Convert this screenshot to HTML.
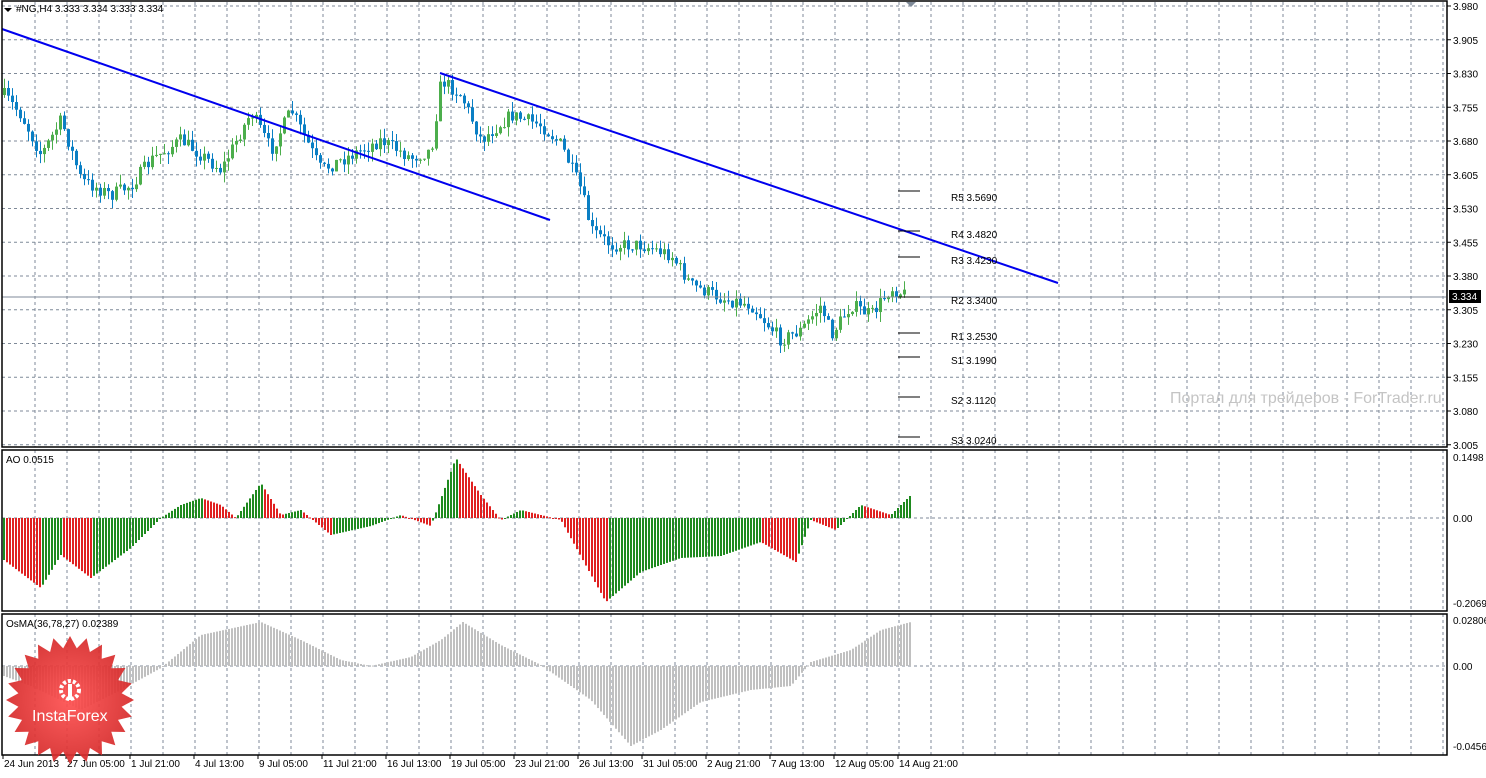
<!DOCTYPE html><html><head><meta charset="utf-8"><style>
body{margin:0;background:#fff;width:1486px;height:773px;overflow:hidden;font-family:"Liberation Sans",sans-serif}
svg text{font-family:"Liberation Sans","DejaVu Sans",sans-serif;font-size:10px;fill:#000}
</style></head><body>
<svg id="s" width="1486" height="773" xmlns="http://www.w3.org/2000/svg">
<rect width="1486" height="773" fill="#fff"/>
<g id="grid"></g>
<g id="bars"></g>
<line x1="2" y1="297" x2="1446" y2="297" stroke="#7f8a98" stroke-width="1"/>
<line x1="2" y1="29" x2="550" y2="220" stroke="#0000ee" stroke-width="2"/>
<line x1="440" y1="73" x2="1058" y2="283" stroke="#0000ee" stroke-width="2"/>
<g id="piv"></g>
<text x="1170" y="403" style="font-size:16px;fill:#c4c4c4">Портал для трейдеров - ForTrader.ru</text>
<g fill="none" stroke="#000" stroke-width="1.5">
<rect x="2" y="1" width="1445" height="446"/>
<rect x="2" y="450" width="1445" height="161"/>
<rect x="2" y="614" width="1445" height="141"/>
</g>
<path d="M4 8 L12 8 L8 12Z" fill="#000"/>
<text x="16" y="12">#NG,H4  3.333 3.334 3.333 3.334</text>
<path d="M906 2 L916 2 L911 7Z" fill="#7f8a98"/>
<text x="6" y="463">AO 0.0515</text>
<text x="6" y="627">OsMA(36,78,27) 0.02389</text>
<rect x="1449" y="290" width="32" height="13" fill="#000"/>
<text x="1452" y="300" style="fill:#fff">3.334</text>
<g id="axis"></g>
<defs><radialGradient id="rg" cx="50%" cy="50%" r="50%"><stop offset="0" stop-color="#ff5050"/><stop offset="1" stop-color="#d62a2a"/></radialGradient></defs>
<path id="star" fill="url(#rg)" opacity="0.92"/>
<g fill="#fff">
<circle cx="70" cy="690" r="9" fill="none" stroke="#fff" stroke-width="4" stroke-dasharray="3 2"/>
<rect x="68" y="684" width="4" height="16"/>
</g>
<text x="32" y="721" style="font-size:16px;fill:#fff">InstaForex</text>
</svg>
<script>
(function(){
var NS="http://www.w3.org/2000/svg";
function el(p,t,a,txt){var e=document.createElementNS(NS,t);for(var k in a)e.setAttribute(k,a[k]);if(txt)e.textContent=txt;document.getElementById(p).appendChild(e);return e;}
for(var x=35;x<=1443;x+=32.0){["2,447","450,611","614,755"].forEach(function(r){var q=r.split(",");el("grid","line",{x1:x,y1:q[0],x2:x,y2:q[1],stroke:"#7f8a98","stroke-dasharray":"3 3"});});}
var prices=["3.980","3.905","3.830","3.755","3.680","3.605","3.530","3.455","3.380","3.305","3.230","3.155","3.080","3.005"];
prices.forEach(function(p,i){var y=6+i*33.75;el("grid","line",{x1:2,y1:y,x2:1446,y2:y,stroke:"#7f8a98","stroke-dasharray":"3 3"});el("axis","line",{x1:1447,y1:y,x2:1451,y2:y,stroke:"#000"});el("axis","text",{x:1453,y:y+4},p);});
[[518,"0.00"],[666,"0.00"]].forEach(function(a){el("grid","line",{x1:2,y1:a[0],x2:1446,y2:a[0],stroke:"#7f8a98","stroke-dasharray":"3 3"});el("axis","text",{x:1453,y:a[0]+4},a[1]);});
el("axis","text",{x:1453,y:461},"0.1498");el("axis","text",{x:1453,y:607},"-0.2069");
el("axis","text",{x:1453,y:624},"0.02806");el("axis","text",{x:1453,y:750},"-0.04562");
var tl=[[3,"24 Jun 2013"],[66,"27 Jun 05:00"],[130,"1 Jul 21:00"],[194,"4 Jul 13:00"],[258,"9 Jul 05:00"],[322,"11 Jul 21:00"],[386,"16 Jul 13:00"],[450,"19 Jul 05:00"],[514,"23 Jul 21:00"],[578,"26 Jul 13:00"],[642,"31 Jul 05:00"],[706,"2 Aug 21:00"],[770,"7 Aug 13:00"],[834,"12 Aug 05:00"],[898,"14 Aug 21:00"]];
tl.forEach(function(t){el("axis","line",{x1:t[0],y1:755,x2:t[0],y2:759,stroke:"#000"});el("axis","text",{x:t[0]+1,y:767},t[1]);});
function interp(k,x){for(var i=0;i<k.length-1;i++){if(x>=k[i][0]&&x<=k[i+1][0]){var t=(x-k[i][0])/(k[i+1][0]-k[i][0]);return k[i][1]+t*(k[i+1][1]-k[i][1]);}}return k[k.length-1][1];}
var seed=7;function rnd(){seed=(seed*16807)%2147483647;return seed/2147483647;}
var main=[[3,95],[20,115],[40,155],[60,120],[80,180],[110,195],[130,185],[150,160],[180,140],[220,170],[250,112],[270,150],[290,110],[320,170],[350,155],[380,140],[410,158],[430,150],[440,80],[460,95],[480,140],[510,115],[540,125],[560,145],[580,190],[590,230],[610,245],[640,245],[670,255],[690,285],[720,298],[750,305],[780,340],[800,330],[820,305],[830,335],[850,305],[870,315],[890,288],[905,295]];
var prev=interp(main,3);
for(var x=3;x<=905;x+=4){var c=interp(main,x)+(rnd()-0.5)*14;var o=prev;var up=c<o;var tp=Math.min(o,c),bt=Math.max(o,c);if(bt-tp<1)bt=tp+1;var col=up?"#4cae4c":"#0a7fc4";
el("bars","line",{x1:x+1.5,y1:tp-rnd()*10,x2:x+1.5,y2:bt+rnd()*10,stroke:col});el("bars","rect",{x:x,y:tp,width:3,height:bt-tp,fill:col});prev=c;}
var ao=[[3,560],[40,588],[60,555],[90,578],[130,548],[160,518],[180,505],[200,498],[220,505],[235,518],[260,483],[280,515],[300,510],[330,535],[370,526],[400,515],[430,526],[455,458],[480,495],[500,520],[520,510],[560,520],[605,602],[640,572],[680,558],[720,556],[760,542],[795,562],[810,520],[835,530],[860,505],[890,515],[910,495]];
var pv=null;for(var x=3;x<=910;x+=3){var v=interp(ao,x);var col=(pv===null||v<=pv)?"#1f8a1f":"#e02020";var t=Math.min(v,518),h=Math.abs(v-518);el("bars","rect",{x:x,y:t,width:2,height:Math.max(h,1),fill:col});pv=v;}
var os=[[3,676],[30,686],[80,710],[120,690],[160,668],[200,635],[260,622],[300,640],[340,660],[370,666],[410,657],[440,640],[462,622],[500,645],[540,665],[590,700],[630,746],[660,730],[700,702],[750,690],[790,686],[810,662],[850,650],[880,630],[910,622]];
for(var x=3;x<=910;x+=3){var v=interp(os,x);var t=Math.min(v,666),h=Math.abs(v-666);el("bars","rect",{x:x,y:t,width:2,height:Math.max(h,1),fill:"#c0c0c0"});}
var pv2=[[191,""],[231,"R4 3.4820"],[257,"R3 3.4230"],[297,"R2 3.3400"],[333,"R1 3.2530"],[357,"S1 3.1990"],[397,"S2 3.1120"],[437,"S3 3.0240"]];
el("piv","text",{x:951,y:201},"R5 3.5690");
pv2.forEach(function(p){el("piv","line",{x1:898,y1:p[0],x2:920,y2:p[0],stroke:"#000"});if(p[1])el("piv","text",{x:951,y:p[0]+7},p[1]);});
var d="",n=24,cx=70,cy=700;for(var i=0;i<n*2;i++){var a=Math.PI*i/n,r=i%2?52:64;d+=(i?"L":"M")+(cx+r*Math.cos(a)).toFixed(1)+" "+(cy+r*Math.sin(a)).toFixed(1);}document.getElementById("star").setAttribute("d",d+"Z");
})();
</script>
</body></html>
